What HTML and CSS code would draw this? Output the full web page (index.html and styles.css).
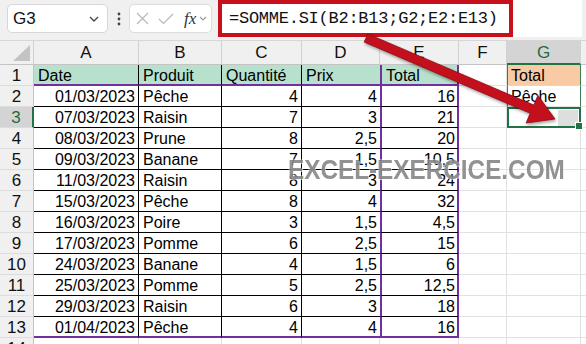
FILE: index.html
```html
<!DOCTYPE html>
<html lang="fr">
<head>
<meta charset="utf-8">
<title>SOMME.SI</title>
<link rel="stylesheet" href="styles.css">
</head>
<body>
<div class="app">
  <div class="topbar">
    <div class="namebox">
      <span class="nb-text">G3</span>
      <svg class="chev" width="10" height="6" viewBox="0 0 10 6"><path d="M1 1 L5 5 L9 1" fill="none" stroke="#444" stroke-width="1.3"/></svg>
    </div>
    <div class="dots">
      <svg width="4" height="14" viewBox="0 0 4 14"><circle cx="2" cy="2" r="1.4" fill="#444"/><circle cx="2" cy="7" r="1.4" fill="#444"/><circle cx="2" cy="12" r="1.4" fill="#444"/></svg>
    </div>
    <div class="fxbox">
      <svg width="13" height="13" viewBox="0 0 13 13"><path d="M1 1 L12 12 M12 1 L1 12" stroke="#b8b8b8" stroke-width="1.2" fill="none"/></svg>
      <svg width="16" height="12" viewBox="0 0 16 12"><path d="M1 6 L5.5 10.5 L15 1" stroke="#b8b8b8" stroke-width="1.2" fill="none"/></svg>
      <span class="fx">fx</span>
      <svg width="8" height="5" viewBox="0 0 8 5"><path d="M1 1 L4 4 L7 1" fill="none" stroke="#999" stroke-width="1.1"/></svg>
    </div>
    <div class="formula">
      <div class="formula-box">=SOMME.SI(B2:B13;G2;E2:E13)</div>
    </div>
  </div>

  <div class="sheet">
    <div class="ch corner"><svg width="18" height="17" viewBox="0 0 18 17"><path d="M17 0 L17 16 L0 16 Z" fill="#c3c3c3"/></svg></div>
    <div class="ch">A</div><div class="ch">B</div><div class="ch">C</div><div class="ch">D</div><div class="ch">E</div><div class="ch">F</div><div class="ch ch-sel">G</div><div class="ch"></div>

    <div class="rh">1</div>
    <div class="c t hdr">Date</div><div class="c t hdr">Produit</div><div class="c t hdr">Quantité</div><div class="c t d hdr">Prix</div><div class="c e hdr">Total</div><div class="c"></div><div class="c g-top">Total</div><div class="c"></div>

    <div class="rh">2</div>
    <div class="c t n">01/03/2023</div><div class="c t">Pêche</div><div class="c t n">4</div><div class="c t d n">4</div><div class="c e n">16</div><div class="c"></div><div class="c g-mid">Pêche</div><div class="c"></div>

    <div class="rh rh-sel">3</div>
    <div class="c t n">07/03/2023</div><div class="c t">Raisin</div><div class="c t n">7</div><div class="c t d n">3</div><div class="c e n">21</div><div class="c"></div><div class="c g-sel"><span class="hidden-val"></span></div><div class="c"></div>

    <div class="rh">4</div>
    <div class="c t n">08/03/2023</div><div class="c t">Prune</div><div class="c t n">8</div><div class="c t d n">2,5</div><div class="c e n">20</div><div class="c"></div><div class="c"></div><div class="c"></div>

    <div class="rh">5</div>
    <div class="c t n">09/03/2023</div><div class="c t">Banane</div><div class="c t n">7</div><div class="c t d n">1,5</div><div class="c e n">10,5</div><div class="c"></div><div class="c"></div><div class="c"></div>

    <div class="rh">6</div>
    <div class="c t n">11/03/2023</div><div class="c t">Raisin</div><div class="c t n">8</div><div class="c t d n">3</div><div class="c e n">24</div><div class="c"></div><div class="c"></div><div class="c"></div>

    <div class="rh">7</div>
    <div class="c t n">15/03/2023</div><div class="c t">Pêche</div><div class="c t n">8</div><div class="c t d n">4</div><div class="c e n">32</div><div class="c"></div><div class="c"></div><div class="c"></div>

    <div class="rh">8</div>
    <div class="c t n">16/03/2023</div><div class="c t">Poire</div><div class="c t n">3</div><div class="c t d n">1,5</div><div class="c e n">4,5</div><div class="c"></div><div class="c"></div><div class="c"></div>

    <div class="rh">9</div>
    <div class="c t n">17/03/2023</div><div class="c t">Pomme</div><div class="c t n">6</div><div class="c t d n">2,5</div><div class="c e n">15</div><div class="c"></div><div class="c"></div><div class="c"></div>

    <div class="rh">10</div>
    <div class="c t n">24/03/2023</div><div class="c t">Banane</div><div class="c t n">4</div><div class="c t d n">1,5</div><div class="c e n">6</div><div class="c"></div><div class="c"></div><div class="c"></div>

    <div class="rh">11</div>
    <div class="c t n">25/03/2023</div><div class="c t">Pomme</div><div class="c t n">5</div><div class="c t d n">2,5</div><div class="c e n">12,5</div><div class="c"></div><div class="c"></div><div class="c"></div>

    <div class="rh">12</div>
    <div class="c t n">29/03/2023</div><div class="c t">Raisin</div><div class="c t n">6</div><div class="c t d n">3</div><div class="c e n">18</div><div class="c"></div><div class="c"></div><div class="c"></div>

    <div class="rh">13</div>
    <div class="c t n bot">01/04/2023</div><div class="c t bot">Pêche</div><div class="c t n bot">4</div><div class="c t d n bot">4</div><div class="c e n bot">16</div><div class="c"></div><div class="c"></div><div class="c"></div>

    <div class="rh">14</div>
    <div class="c"></div><div class="c"></div><div class="c"></div><div class="c"></div><div class="c"></div><div class="c"></div><div class="c"></div><div class="c"></div>
  </div>

  <svg class="arrow" width="586" height="344" viewBox="0 0 586 344">
    <polygon points="367.8,33.9 533.8,105.1 537.9,95.4 555,119 526.1,123 530.2,113.3 364.2,42.1" fill="#c40f1c" stroke="#8e0a12" stroke-width="0.8"/>
  </svg>
  <div class="watermark">EXCEL-EXERCICE.COM</div>
</div>
</body>
</html>
```

FILE: styles.css
```css
* { box-sizing: border-box; }
html, body { margin: 0; padding: 0; }
body {
  width: 586px;
  height: 344px;
  overflow: hidden;
  background: #ffffff;
  font-family: "Liberation Sans", Arial, sans-serif;
  color: #000;
}
.app {
  position: relative;
  width: 586px;
  height: 344px;
  overflow: hidden;
}

/* ---------- top bar ---------- */
.topbar {
  height: 41px;
  display: flex;
  align-items: flex-start;
  padding-left: 7px;
  background: #f0f0f0;
  border-bottom: 1px solid #d6d6d6;
}
.namebox {
  margin-top: 4px;
  width: 101px;
  height: 29px;
  background: #fff;
  border: 1px solid #d7d7d7;
  border-radius: 5px;
  display: flex;
  align-items: center;
  justify-content: space-between;
  padding: 0 8px 0 5px;
  font-size: 17px;
}
.nb-text { color: #111; }
.dots {
  width: 21px;
  height: 37px;
  display: flex;
  align-items: center;
  justify-content: center;
}
.fxbox {
  margin-top: 4px;
  width: 83px;
  height: 29px;
  background: #fff;
  border: 1px solid #dcdcdc;
  border-radius: 5px;
  display: flex;
  align-items: center;
  gap: 9px;
  padding-left: 6px;
}
.fx {
  font-family: "Liberation Serif", "Times New Roman", serif;
  font-style: italic;
  font-size: 17px;
  color: #333;
  margin-left: 1px;
  margin-right: -6px;
}
.formula {
  margin-left: 6px;
  margin-right: 4px;
  flex: 1;
  height: 37px;
  background: #fff;
}
.formula-box {
  width: 295px;
  height: 37px;
  border: 4px solid #c8101c;
  padding-left: 7px;
  font-family: "Liberation Mono", "Courier New", monospace;
  font-size: 17px;
  letter-spacing: -0.25px;
  line-height: 29px;
  color: #111;
  white-space: nowrap;
}

/* ---------- sheet grid ---------- */
.sheet {
  display: grid;
  grid-template-columns: 34px 105px 83px 80px 78px 79px 48px 74px 1fr;
  grid-template-rows: 24px;
  grid-auto-rows: 21px;
}
.ch {
  background: #f0f0f0;
  border-right: 1px solid #d2d2d2;
  border-bottom: 1px solid #c4c4c4;
  text-align: center;
  font-size: 17px;
  line-height: 24px;
  color: #111;
}
.corner {
  display: flex;
  align-items: flex-end;
  justify-content: flex-end;
  padding: 0 2px 2px 0;
}
.ch-sel {
  background: #d4d4d4;
  color: #1e6b3e;
  border-bottom: 2px solid #217346;
}
.rh {
  background: #f0f0f0;
  border-right: 1px solid #c4c4c4;
  border-bottom: 1px solid #dcdcdc;
  text-align: center;
  font-size: 17px;
  line-height: 21px;
  color: #111;
}
.rh-sel {
  background: #d4d4d4;
  color: #1e6b3e;
  border-right: 2px solid #217346;
}

.c {
  border-right: 1px solid #e1e1e1;
  border-bottom: 1px solid #e1e1e1;
  font-size: 16px;
  line-height: 20px;
  padding: 1px 3px 0 4px;
  white-space: nowrap;
  overflow: hidden;
}
.n { text-align: right; padding-right: 3px; }
.t { border-right-color: #000; border-bottom-color: #000; }
.d { border-right: 0; }
.e {
  border-left: 2px solid #7030a0;
  border-right: 2px solid #7030a0;
  border-bottom-color: #000;
}
.e.n { padding-right: 2px; }
.hdr {
  background: #b7e1cd;
  border-bottom: 2px solid #7030a0;
  padding-left: 4px;
}
.bot { border-bottom: 2px solid #7030a0; }

.g-top {
  background: #f8cba4;
  border-left: 1px solid #3d7c52;
  border-right: 1px solid #3d7c52;
  border-bottom-color: #d8d8d8;
  padding-left: 3px;
}
.g-mid {
  border-left: 1px solid #3d7c52;
  border-right: 1px solid #3d7c52;
  padding-left: 3px;
}
.g-sel {
  position: relative;
  border: 2px solid #217346;
  display: flex;
  justify-content: flex-end;
  align-items: flex-end;
  padding: 0 1px 0 0;
  overflow: visible;
}
.g-sel::after {
  content: "";
  position: absolute;
  right: -4px;
  bottom: -4px;
  width: 6px;
  height: 6px;
  background: #217346;
  border: 1px solid #fff;
}
.hidden-val {
  width: 20px;
  height: 16px;
  background: #dcdfdd;
}

/* ---------- overlays ---------- */
.arrow {
  position: absolute;
  left: 0;
  top: 0;
  pointer-events: none;
  filter: drop-shadow(1px 2px 1.5px rgba(0, 0, 0, 0.35));
}
.watermark {
  position: absolute;
  left: 288px;
  top: 157px;
  font-family: "Liberation Sans", Arial, sans-serif;
  font-weight: bold;
  font-size: 27px;
  line-height: 27px;
  color: rgba(115, 115, 115, 0.78);
  transform: scaleX(0.9);
  transform-origin: left top;
  white-space: nowrap;
  text-shadow: 1px 1px 0 rgba(255, 255, 255, 0.6), -1px -1px 0 rgba(255, 255, 255, 0.4);
  pointer-events: none;
}
```
